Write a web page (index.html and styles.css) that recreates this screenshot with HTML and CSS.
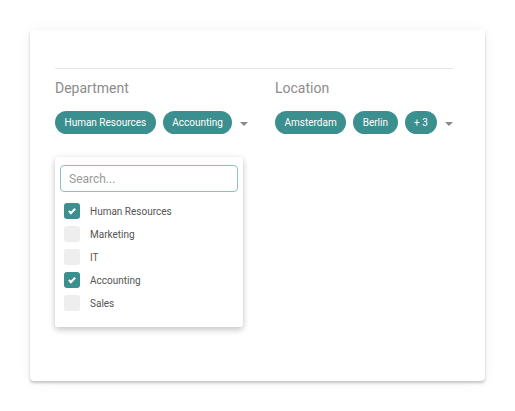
FILE: index.html
```html
<!DOCTYPE html>
<html lang="en">

<head>
    <meta charset="UTF-8">
    <meta name="viewport" content="width=device-width, initial-scale=1.0">
    <title>Filter Chips</title>
    <link rel="stylesheet" href="styles.css">
</head>

<body>

    <div class="card">
        <div class="divider"></div>

        <div class="filters">
            <div class="filter">
                <h3>Department</h3>
                <div class="chip-row">
                    <span class="chip">Human Resources</span>
                    <span class="chip">Accounting</span>
                    <span class="caret"></span>
                </div>

                <div class="dropdown">
                    <input type="text" class="search-input" placeholder="Search...">
                    <ul class="option-list">
                        <li class="option is-checked"><span class="check"></span>Human Resources</li>
                        <li class="option"><span class="check"></span>Marketing</li>
                        <li class="option"><span class="check"></span>IT</li>
                        <li class="option is-checked"><span class="check"></span>Accounting</li>
                        <li class="option"><span class="check"></span>Sales</li>
                    </ul>
                </div>
            </div>

            <div class="filter">
                <h3>Location</h3>
                <div class="chip-row">
                    <span class="chip">Amsterdam</span>
                    <span class="chip">Berlin</span>
                    <span class="chip">+ 3</span>
                    <span class="caret"></span>
                </div>
            </div>
        </div>
    </div>

</body>

</html>
```

FILE: styles.css
```css
/* --- Page --- */
body {
    font-family: Roboto, "Liberation Sans", Arial, sans-serif;
    background-color: #ffffff;
    margin: 0;
    padding: 30px;
}

.card {
    width: 455px;
    height: 351px;
    box-sizing: border-box;
    padding: 38px 32px 0 25px;
    background: #ffffff;
    border-radius: 4px;
    box-shadow: 0 2px 3px rgba(0, 0, 0, 0.22), 0 0 14px rgba(0, 0, 0, 0.05);
}

.divider {
    height: 1px;
    background: #e6e6e6;
}

/* --- Filter columns --- */
.filters {
    display: flex;
}

.filter {
    width: 220px;
    flex-shrink: 0;
}

.filter h3 {
    margin: 11px 0 0;
    font-size: 14px;
    font-weight: 400;
    line-height: 16px;
    color: #8c8c8c;
}

.chip-row {
    display: flex;
    align-items: center;
    gap: 7px;
    margin-top: 15px;
}

.chip {
    height: 23px;
    line-height: 23px;
    padding: 0 9.5px;
    border-radius: 12px;
    background: #3b8f8e;
    color: #ffffff;
    font-size: 10px;
    white-space: nowrap;
}

/* small grey triangle */
.caret {
    width: 0;
    height: 0;
    margin-left: 1px;
    margin-top: 3px;
    border-left: 4px solid transparent;
    border-right: 4px solid transparent;
    border-top: 4px solid #8a8a8a;
}

/* --- Dropdown panel --- */
.dropdown {
    width: 188px;
    box-sizing: border-box;
    margin-top: 23px;
    padding: 8px 5px 16px;
    background: #ffffff;
    border-radius: 3px;
    box-shadow: 0 3px 6px rgba(0, 0, 0, 0.2), 0 0 6px rgba(0, 0, 0, 0.06);
}

.search-input {
    display: block;
    width: 100%;
    height: 27px;
    box-sizing: border-box;
    padding: 0 8px;
    border: 1px solid #8cc3c2;
    border-radius: 4px;
    font-family: inherit;
    font-size: 12px;
    color: #333;
}

.search-input::placeholder {
    color: #9a9a9a;
}

.option-list {
    display: flex;
    flex-direction: column;
    gap: 7px;
    list-style: none;
    margin: 11px 0 0;
    padding: 0 0 0 4px;
}

.option {
    display: flex;
    align-items: center;
    gap: 10px;
    height: 16px;
    font-size: 10px;
    color: #555555;
}

.option .check {
    width: 16px;
    height: 16px;
    border-radius: 3px;
    background: #eeeeee;
    flex-shrink: 0;
    position: relative;
}

.option.is-checked .check {
    background: #3b8f8e;
}

/* tick mark */
.option.is-checked .check::after {
    content: '';
    position: absolute;
    left: 6px;
    top: 4px;
    width: 2px;
    height: 5px;
    border-right: 2px solid #ffffff;
    border-bottom: 2px solid #ffffff;
    transform: rotate(45deg);
}
```
